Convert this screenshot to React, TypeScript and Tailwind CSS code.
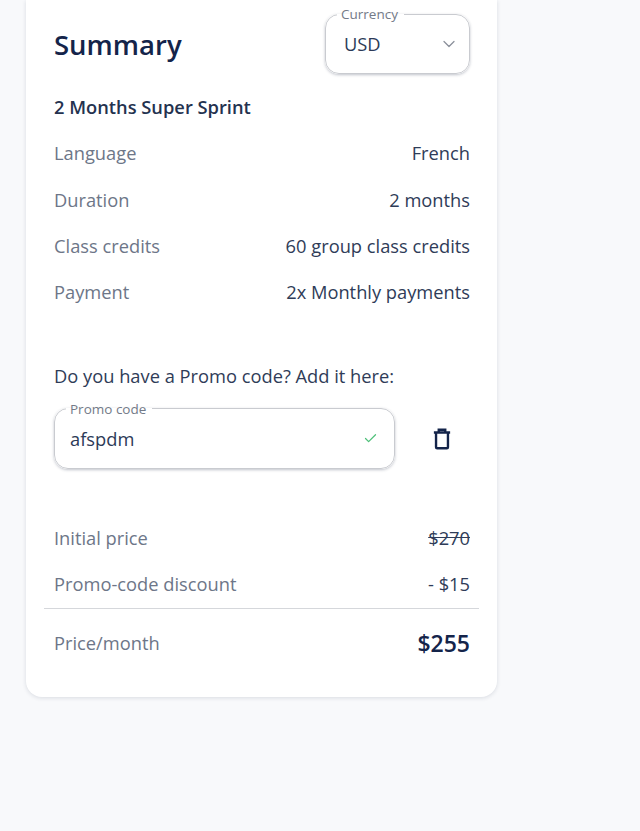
import React from 'react'
import { ChevronDown, Check } from 'lucide-react'

const details = [
  { label: 'Language', value: 'French' },
  { label: 'Duration', value: '2 months' },
  { label: 'Class credits', value: '60 group class credits' },
  { label: 'Payment', value: '2x Monthly payments' },
]

function Outlined({ label, className, children }: { label: string; className: string; children: React.ReactNode }) {
  return (
    <fieldset className={`h-[67px] rounded-[14px] border border-[#c9cbd0] bg-white shadow-[0_1px_3px_rgba(30,40,70,0.28)] px-[11px] -mt-[7px] ${className}`}>
      <legend className="ml-0 pl-[4px] pr-[6px] text-[13.5px] leading-[14px] text-[#737a88]">{label}</legend>
      {children}
    </fieldset>
  )
}

function Row({ label, children, className = 'h-[46.2px]' }: { label: string; children: React.ReactNode; className?: string }) {
  return (
    <div className={`flex items-center justify-between ${className}`}>
      <span className="text-[18.3px] text-[#6d7688]">{label}</span>
      {children}
    </div>
  )
}

export default function App() {
  return (
    <div className="min-h-[831px] bg-[#f8f9fb] pl-[26px] font-['Open_Sans',sans-serif]">
      <div className="w-[471px] h-[697px] rounded-b-[16px] bg-white pl-[28px] pr-[27px] shadow-[0_1px_4px_rgba(30,40,70,0.14)]">
        <div className="flex justify-between pt-[14px]">
          <h2 className="mt-[13px] text-[27.5px] leading-[36px] font-semibold text-[#14244a]">Summary</h2>
          <Outlined label="Currency" className="w-[145px]">
            <div className="flex h-[46px] items-center justify-between pl-[7px] -mr-[1px] text-[18.3px] text-[#2c3a57]">
              USD
              <ChevronDown className="h-[20px] w-[20px] text-[#8b909b]" strokeWidth={1.5} />
            </div>
          </Outlined>
        </div>

        <h3 className="mt-[19px] text-[18.3px] leading-[28px] font-semibold text-[#24324f]">2 Months Super Sprint</h3>

        <div className="mt-[9px]">
          {details.map((d) => (
            <Row key={d.label} label={d.label}>
              <span className="text-[18.3px] text-[#2f3c58]">{d.value}</span>
            </Row>
          ))}
        </div>

        <p className="mt-[47px] text-[18.3px] leading-[28px] text-[#2f3c58]">Do you have a Promo code? Add it here:</p>

        <div className="mt-[19px] flex items-center">
          <Outlined label="Promo code" className="w-[341px]">
            <div className="flex h-[45px] items-center justify-between pl-[4px] pr-[5px] text-[18.3px] text-[#2c3a57]">
              afspdm
              <Check className="h-[15px] w-[15px] text-[#4fc07a]" strokeWidth={2} />
            </div>
          </Outlined>
          <svg className="ml-[34px] h-[26px] w-[26px] text-[#14244a]" viewBox="0 0 24 24" fill="none" stroke="currentColor" strokeWidth="2.2">
            <path d="M4.5 6H19.5M9 6V3.5H15V6M6.5 6V19.5A1 1 0 0 0 7.5 20.5H16.5A1 1 0 0 0 17.5 19.5V6" />
          </svg>
        </div>

        <div className="mt-[46px]">
          <Row label="Initial price">
            <span className="text-[18.3px] text-[#2f3c58] line-through">$270</span>
          </Row>
          <Row label="Promo-code discount">
            <span className="text-[18.3px] text-[#2f3c58]">- $15</span>
          </Row>
        </div>
        <div className="mt-[1px] -ml-[10px] -mr-[9px] border-t border-[#d5d7db]" />
        <Row label="Price/month" className="h-[68px]">
          <span className="text-[23px] font-semibold text-[#14244a]">$255</span>
        </Row>
      </div>
    </div>
  )
}
